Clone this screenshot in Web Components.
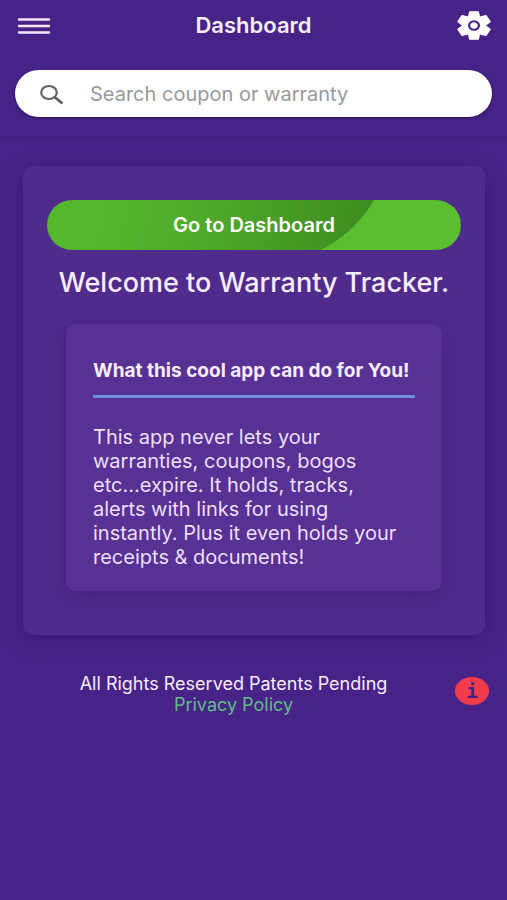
<!DOCTYPE html>
<html lang="en">
<head>
<meta charset="utf-8">
<meta name="viewport" content="width=device-width, initial-scale=1">
<title>Warranty Tracker</title>
<style>
  body {
    margin: 0;
    min-height: 100vh;
    background: #472387;
    color: #f8ecff;
    font-family: Inter, "Liberation Sans", sans-serif;
  }
</style>
</head>
<body>
<app-header>
  <span slot="title">Dashboard</span>
  <search-field label="Search coupon or warranty"></search-field>
</app-header>
<main>
  <welcome-card>
    <dashboard-button slot="action">Go to Dashboard</dashboard-button>
    <span slot="title">Welcome to Warranty Tracker.</span>
    <info-panel>
      <span slot="title">What this cool app can do for You!</span>
      This app never lets your warranties, coupons, bogos etc...expire. It holds, tracks, alerts with links for using instantly. Plus it even holds your receipts &amp; documents!
    </info-panel>
  </welcome-card>
</main>
<app-footer>All Rights Reserved Patents Pending</app-footer>

<script>
class AppHeader extends HTMLElement {
  constructor() {
    super();
    this.attachShadow({ mode: 'open' });
  }

  connectedCallback() {
    this.shadowRoot.innerHTML = `
      <style>
        :host {
          display: block;
          padding-bottom: 20px;
          border-bottom: 1px solid #3f1e7a;
        }

        .bar {
          display: grid;
          grid-template-columns: 36px 1fr 36px;
          align-items: center;
          height: 50px;
          padding: 0 16px;
        }

        h1 {
          margin: 0;
          font-size: 22px;
          line-height: 24px;
          font-weight: 600;
          text-align: center;
        }

        button {
          display: flex;
          align-items: center;
          height: 36px;
          padding: 0;
          border: 0;
          background: none;
          cursor: pointer;
        }

        .settings {
          justify-content: flex-end;
        }

        svg {
          display: block;
        }

        .search {
          padding: 20px 15px 0;
        }
      </style>
      <header>
        <div class="bar">
          <button aria-label="Menu">
            <svg width="36" height="20" viewBox="0 0 36 20" stroke="#f5e6ff" stroke-width="2.4" stroke-linecap="round">
              <path d="M3 4.5H33M3 11H33M3 17.5H33"/>
            </svg>
          </button>
          <h1><slot name="title"></slot></h1>
          <button class="settings" aria-label="Settings">
            <svg width="34" height="29" viewBox="-10 -10 20 20" preserveAspectRatio="none">
              <g fill="#fff" stroke="#fff" stroke-width="1" stroke-linejoin="round">
                <circle r="6.6"/>
                <path id="tooth" d="M-3.1 -6L-2.4 -9.4H2.4L3.1 -6V6L2.4 9.4H-2.4L-3.1 6Z"/>
                <use href="#tooth" transform="rotate(60)"/>
                <use href="#tooth" transform="rotate(120)"/>
              </g>
              <circle r="2.9" fill="#fff" stroke="#472387" stroke-width="1.3"/>
            </svg>
          </button>
        </div>
        <div class="search"><slot></slot></div>
      </header>
    `;
  }
}

class SearchField extends HTMLElement {
  constructor() {
    super();
    this.attachShadow({ mode: 'open' });
  }

  connectedCallback() {
    const label = this.getAttribute('label') || '';
    this.shadowRoot.innerHTML = `
      <style>
        :host {
          display: block;
        }

        label {
          display: flex;
          align-items: center;
          gap: 25px;
          height: 47px;
          padding: 0 24px;
          border-radius: 24px;
          background: #fff;
          box-shadow: 0 1px 3px rgba(20, 0, 60, 0.6);
        }

        svg {
          flex: none;
        }

        input {
          flex: 1;
          min-width: 0;
          padding: 0;
          border: 0;
          outline: 0;
          background: none;
          color: #444;
          font: inherit;
          font-size: 20px;
          line-height: 24px;
        }

        input::placeholder {
          color: #999;
          opacity: 1;
        }
      </style>
      <label>
        <svg width="26" height="22" viewBox="0 0 26 22" fill="none" stroke="#606060">
          <ellipse cx="10" cy="9.5" rx="7.8" ry="6.5" stroke-width="2.2"/>
          <path d="M15.5 14L23.5 20.5" stroke-width="2.8"/>
        </svg>
        <input type="search" placeholder="${label}" aria-label="${label}">
      </label>
    `;
  }
}

class DashboardButton extends HTMLElement {
  constructor() {
    super();
    this.attachShadow({ mode: 'open' });
  }

  connectedCallback() {
    this.shadowRoot.innerHTML = `
      <style>
        :host {
          display: block;
        }

        button {
          display: block;
          width: 100%;
          height: 50px;
          padding: 0;
          border: 0;
          border-radius: 25px;
          /* right half: light green outside a circle that hangs above the button */
          background:
            radial-gradient(circle at 0 -62px, transparent 124px, #5abf30 125px) right / 47% 100% no-repeat,
            linear-gradient(100deg, #54b82e 12%, #4fac2b 35%, #3e8c20 78%);
          color: #fff;
          font: inherit;
          font-size: 20px;
          line-height: 24px;
          font-weight: 600;
          cursor: pointer;
        }
      </style>
      <button><slot></slot></button>
    `;
  }
}

class WelcomeCard extends HTMLElement {
  constructor() {
    super();
    this.attachShadow({ mode: 'open' });
  }

  connectedCallback() {
    this.shadowRoot.innerHTML = `
      <style>
        :host {
          display: block;
          margin: 28px 22px 0 23px;
          padding: 34px 24px 44px;
          border-radius: 10px;
          background: #4f2c8b;
          box-shadow: 0 5px 20px rgba(40, 10, 90, 0.35);
        }

        h2 {
          margin: 16px 0 24px;
          font-size: 27px;
          line-height: 34px;
          font-weight: 500;
          text-align: center;
        }

        .content {
          padding: 0 19px;
        }
      </style>
      <slot name="action"></slot>
      <h2><slot name="title"></slot></h2>
      <div class="content"><slot></slot></div>
    `;
  }
}

class InfoPanel extends HTMLElement {
  constructor() {
    super();
    this.attachShadow({ mode: 'open' });
  }

  connectedCallback() {
    this.shadowRoot.innerHTML = `
      <style>
        :host {
          display: block;
          padding: 35px 27px 22px;
          border-radius: 10px;
          background: #573193;
          box-shadow: 0 5px 20px rgba(50, 15, 100, 0.35);
        }

        h3 {
          margin: 0 0 27px;
          padding-bottom: 12px;
          border-bottom: 3px solid #6c8fda;
          font-size: 19px;
          line-height: 24px;
          font-weight: 700;
        }

        p {
          margin: 0;
          padding-right: 8px;
          color: #eedffa;
          font-size: 20px;
          line-height: 24px;
        }
      </style>
      <h3><slot name="title"></slot></h3>
      <p><slot></slot></p>
    `;
  }
}

class AppFooter extends HTMLElement {
  constructor() {
    super();
    this.attachShadow({ mode: 'open' });
  }

  connectedCallback() {
    this.shadowRoot.innerHTML = `
      <style>
        :host {
          display: block;
          padding: 38px 18px 0 12px;
        }

        footer {
          display: flex;
          align-items: flex-start;
        }

        .legal {
          flex: 1;
          font-size: 18px;
          line-height: 21px;
          text-align: center;
        }

        a {
          color: #5fbd85;
          text-decoration: none;
        }

        button {
          width: 34px;
          height: 28px;
          margin-top: 4px;
          padding: 0;
          border: 0;
          border-radius: 50%;
          background: #f23c4b;
          color: #472387;
          font: bold 20px/28px "DejaVu Sans Mono", monospace;
          cursor: pointer;
        }
      </style>
      <footer>
        <div class="legal">
          <div><slot></slot></div>
          <a href="#privacy">Privacy Policy</a>
        </div>
        <button aria-label="Information">i</button>
      </footer>
    `;
  }
}

customElements.define('app-header', AppHeader);
customElements.define('search-field', SearchField);
customElements.define('dashboard-button', DashboardButton);
customElements.define('welcome-card', WelcomeCard);
customElements.define('info-panel', InfoPanel);
customElements.define('app-footer', AppFooter);
</script>
</body>
</html>
